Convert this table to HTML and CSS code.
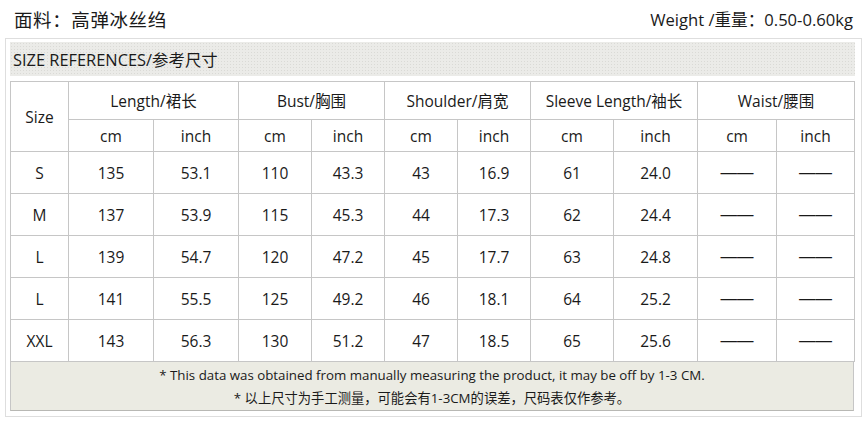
FILE: index.html
```html
<!DOCTYPE html>
<html lang="zh">
<head>
<meta charset="utf-8">
<link rel="stylesheet" href="styles.css">
</head>
<body>
<div class="top">
  <div class="fabric">面料：高弹冰丝绉</div>
  <div class="weight">Weight /重量：0.50-0.60kg</div>
</div>
<div class="box">
  <div class="head">SIZE REFERENCES/参考尺寸</div>
  <table class="sizes">
    <colgroup>
      <col style="width:58px"><col style="width:85px"><col style="width:85px"><col style="width:73px"><col style="width:73px"><col style="width:73px"><col style="width:73px"><col style="width:83px"><col style="width:84px"><col style="width:79px"><col style="width:78px">
    </colgroup>
    <tr class="h1">
      <td rowspan="2">Size</td>
      <td colspan="2">Length/裙长</td>
      <td colspan="2">Bust/胸围</td>
      <td colspan="2">Shoulder/肩宽</td>
      <td colspan="2">Sleeve Length/袖长</td>
      <td colspan="2">Waist/腰围</td>
    </tr>
    <tr class="h2">
      <td>cm</td><td>inch</td><td>cm</td><td>inch</td><td>cm</td><td>inch</td><td>cm</td><td>inch</td><td>cm</td><td>inch</td>
    </tr>
    <tr class="row"><td>S</td><td>135</td><td>53.1</td><td>110</td><td>43.3</td><td>43</td><td>16.9</td><td>61</td><td>24.0</td><td class="dash">——</td><td class="dash">——</td></tr>
    <tr class="row"><td>M</td><td>137</td><td>53.9</td><td>115</td><td>45.3</td><td>44</td><td>17.3</td><td>62</td><td>24.4</td><td class="dash">——</td><td class="dash">——</td></tr>
    <tr class="row"><td>L</td><td>139</td><td>54.7</td><td>120</td><td>47.2</td><td>45</td><td>17.7</td><td>63</td><td>24.8</td><td class="dash">——</td><td class="dash">——</td></tr>
    <tr class="row"><td>L</td><td>141</td><td>55.5</td><td>125</td><td>49.2</td><td>46</td><td>18.1</td><td>64</td><td>25.2</td><td class="dash">——</td><td class="dash">——</td></tr>
    <tr class="row"><td>XXL</td><td>143</td><td>56.3</td><td>130</td><td>51.2</td><td>47</td><td>18.5</td><td>65</td><td>25.6</td><td class="dash">——</td><td class="dash">——</td></tr>
  </table>
  <div class="foot">
    <div>* This data was obtained from manually measuring the product, it may be off by 1-3 CM.</div>
    <div>* 以上尺寸为手工测量，可能会有1-3CM的误差，尺码表仅作参考。</div>
  </div>
</div>
</body>
</html>
```

FILE: styles.css
```css
html, body {
  margin: 0;
  padding: 0;
  background: #fff;
}
body {
  font-family: "Open Sans", "Noto Sans CJK SC", sans-serif;
  color: #1a1a1a;
  width: 868px;
}
.top {
  height: 38px;
  display: flex;
  justify-content: space-between;
  align-items: center;
  padding: 0 15px 0 14px;
  box-sizing: border-box;
}
.fabric {
  font-size: 18.5px;
  letter-spacing: 0.6px;
}
.weight {
  font-size: 16.6px;
}
.box {
  margin-left: 5px;
  width: 857px;
  box-sizing: border-box;
  border: 1px solid #dedede;
  padding: 3px 6px 5px 4px;
}
.head {
  height: 34px;
  display: flex;
  align-items: center;
  padding-left: 3px;
  font-size: 16.4px;
  background-color: #ebebe8;
  background-image: radial-gradient(circle, #dadad6 0.8px, transparent 1px);
  background-size: 3px 3px;
  margin-bottom: 5px;
}
.sizes {
  width: 844px;
  border-collapse: collapse;
  table-layout: fixed;
  font-size: 15.5px;
}
.sizes td {
  border: 1px solid #c6c6c6;
  text-align: center;
  padding: 0;
}
.h1 td { height: 37px; }
.h2 td { height: 31px; }
.row td { height: 41px; }
.dash {
  font-family: "Liberation Sans", sans-serif;
  font-size: 16.5px;
  letter-spacing: 0;
}
.foot {
  height: 49px;
  box-sizing: border-box;
  border: 1px solid #c6c6c6;
  border-top: none;
  border-bottom-color: #b8b8b4;
  background: #ebebe3;
  display: flex;
  flex-direction: column;
  justify-content: center;
  align-items: center;
  gap: 4px;
  font-size: 13.3px;
  width: 844px;
}
```
